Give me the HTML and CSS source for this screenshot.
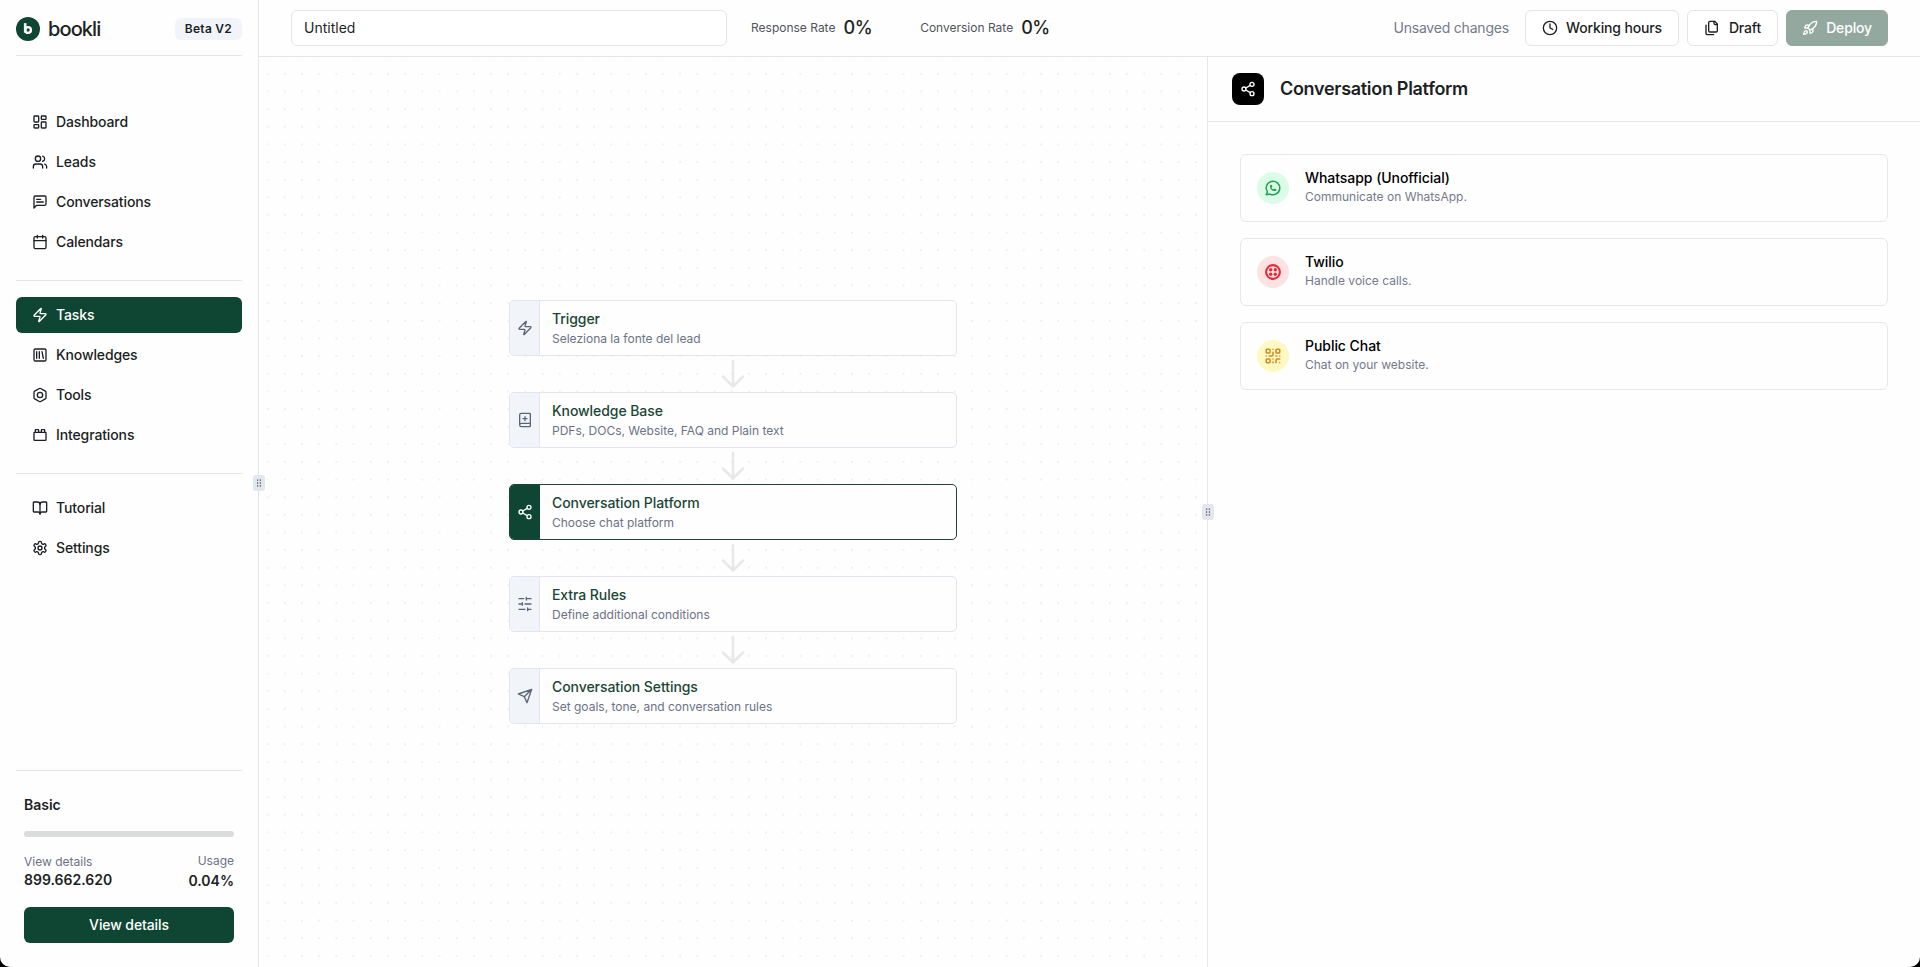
FILE: index.html
```html
<!DOCTYPE html>
<html lang="en">
<head>
    <meta charset="UTF-8">
    <meta name="viewport" content="width=device-width, initial-scale=1.0">
    <title>Bookli - Tasks</title>
    <link rel="stylesheet" href="styles.css">
</head>
<body>
    <div class="app">
        <aside class="sidebar">
            <div class="brand">
                <svg class="logo" viewBox="0 0 24 24"><circle cx="12" cy="12" r="12" fill="#0f4633"/><path d="M9.2 6.2v9.4" stroke="#fff" stroke-width="2.6" fill="none"/><circle cx="12" cy="13" r="2.9" stroke="#fff" stroke-width="2.4" fill="none"/></svg>
                <span class="brand-name">bookli</span>
                <span class="badge">Beta V2</span>
            </div>

            <nav class="menu menu-main">
                <a class="item"><svg class="icon" viewBox="0 0 24 24"><rect x="3" y="3" width="7" height="9" rx="1"/><rect x="14" y="3" width="7" height="5" rx="1"/><rect x="14" y="12" width="7" height="9" rx="1"/><rect x="3" y="16" width="7" height="5" rx="1"/></svg>Dashboard</a>
                <a class="item"><svg class="icon" viewBox="0 0 24 24"><path d="M16 21v-2a4 4 0 0 0-4-4H6a4 4 0 0 0-4 4v2"/><circle cx="9" cy="7" r="4"/><path d="M22 21v-2a4 4 0 0 0-3-3.87M16 3.13a4 4 0 0 1 0 7.75"/></svg>Leads</a>
                <a class="item"><svg class="icon" viewBox="0 0 24 24"><path d="M21 15a2 2 0 0 1-2 2H7l-4 4V5a2 2 0 0 1 2-2h14a2 2 0 0 1 2 2z"/><path d="M13 8H7M17 12H7"/></svg>Conversations</a>
                <a class="item"><svg class="icon" viewBox="0 0 24 24"><path d="M8 2v4M16 2v4"/><rect x="3" y="4" width="18" height="18" rx="2"/><path d="M3 10h18"/></svg>Calendars</a>
            </nav>
            <nav class="menu">
                <a class="item active"><svg class="icon" viewBox="0 0 24 24"><path d="M4 14a1 1 0 0 1-.78-1.63l9.9-10.2a.5.5 0 0 1 .86.46l-1.92 6.02A1 1 0 0 0 13 10h7a1 1 0 0 1 .78 1.63l-9.9 10.2a.5.5 0 0 1-.86-.46l1.92-6.02A1 1 0 0 0 11 14z"/></svg>Tasks</a>
                <a class="item"><svg class="icon" viewBox="0 0 24 24"><rect x="3" y="3" width="18" height="18" rx="2"/><path d="M7 7v10M11 7v10M15 7l2 10"/></svg>Knowledges</a>
                <a class="item"><svg class="icon" viewBox="0 0 24 24"><path d="M21 16V8a2 2 0 0 0-1-1.73l-7-4a2 2 0 0 0-2 0l-7 4A2 2 0 0 0 3 8v8a2 2 0 0 0 1 1.73l7 4a2 2 0 0 0 2 0l7-4A2 2 0 0 0 21 16z"/><circle cx="12" cy="12" r="4"/></svg>Tools</a>
                <a class="item"><svg class="icon" viewBox="0 0 24 24"><rect x="3" y="8" width="18" height="12" rx="1"/><path d="M10 8V5c0-.6-.4-1-1-1H6a1 1 0 0 0-1 1v3M19 8V5c0-.6-.4-1-1-1h-3a1 1 0 0 0-1 1v3"/></svg>Integrations</a>
            </nav>
            <nav class="menu">
                <a class="item"><svg class="icon" viewBox="0 0 24 24"><path d="M12 7v14"/><path d="M3 18a1 1 0 0 1-1-1V4a1 1 0 0 1 1-1h5a4 4 0 0 1 4 4 4 4 0 0 1 4-4h5a1 1 0 0 1 1 1v13a1 1 0 0 1-1 1h-6a3 3 0 0 0-3 3 3 3 0 0 0-3-3z"/></svg>Tutorial</a>
                <a class="item"><svg class="icon" viewBox="0 0 24 24"><path d="M12.22 2h-.44a2 2 0 0 0-2 2v.18a2 2 0 0 1-1 1.73l-.43.25a2 2 0 0 1-2 0l-.15-.08a2 2 0 0 0-2.73.73l-.22.38a2 2 0 0 0 .73 2.73l.15.1a2 2 0 0 1 1 1.72v.51a2 2 0 0 1-1 1.74l-.15.09a2 2 0 0 0-.73 2.73l.22.38a2 2 0 0 0 2.73.73l.15-.08a2 2 0 0 1 2 0l.43.25a2 2 0 0 1 1 1.73V20a2 2 0 0 0 2 2h.44a2 2 0 0 0 2-2v-.18a2 2 0 0 1 1-1.73l.43-.25a2 2 0 0 1 2 0l.15.08a2 2 0 0 0 2.73-.73l.22-.39a2 2 0 0 0-.73-2.73l-.15-.08a2 2 0 0 1-1-1.74v-.5a2 2 0 0 1 1-1.74l.15-.09a2 2 0 0 0 .73-2.73l-.22-.38a2 2 0 0 0-2.73-.73l-.15.08a2 2 0 0 1-2 0l-.43-.25a2 2 0 0 1-1-1.73V4a2 2 0 0 0-2-2z"/><circle cx="12" cy="12" r="3"/></svg>Settings</a>
            </nav>

            <div class="plan">
                <div class="plan-name">Basic</div>
                <div class="progress"></div>
                <div class="usage">
                    <div>
                        <div class="usage-label">View details</div>
                        <div class="usage-value">899.662.620</div>
                    </div>
                    <div class="usage-right">
                        <div class="usage-label">Usage</div>
                        <div class="usage-value">0.04%</div>
                    </div>
                </div>
                <button class="btn-primary">View details</button>
            </div>
            <span class="handle"><svg viewBox="0 0 24 24"><circle cx="9" cy="5" r="1"/><circle cx="9" cy="12" r="1"/><circle cx="9" cy="19" r="1"/><circle cx="15" cy="5" r="1"/><circle cx="15" cy="12" r="1"/><circle cx="15" cy="19" r="1"/></svg></span>
        </aside>

        <div class="main">
            <header class="topbar">
                <input class="task-name" type="text" value="Untitled">
                <div class="rate">Response Rate <b>0%</b></div>
                <div class="rate rate-conversion">Conversion Rate <b>0%</b></div>
                <div class="actions">
                    <span class="unsaved">Unsaved changes</span>
                    <button class="btn"><svg class="icon" viewBox="0 0 24 24"><circle cx="12" cy="12" r="10"/><path d="M12 6v6l4 2"/></svg>Working hours</button>
                    <button class="btn btn-draft"><svg class="icon" viewBox="0 0 24 24"><path d="M20 7h-3a2 2 0 0 1-2-2V2"/><path d="M9 18a2 2 0 0 1-2-2V4a2 2 0 0 1 2-2h7l4 4v10a2 2 0 0 1-2 2Z"/><path d="M3 7.6v12.8A1.6 1.6 0 0 0 4.6 22h9.8"/></svg>Draft</button>
                    <button class="btn btn-deploy"><svg class="icon" viewBox="0 0 24 24"><path d="M4.5 16.5c-1.5 1.26-2 5-2 5s3.74-.5 5-2c.71-.84.7-2.13-.09-2.91a2.18 2.18 0 0 0-2.91-.09z"/><path d="m12 15-3-3a22 22 0 0 1 2-3.95A12.88 12.88 0 0 1 22 2c0 2.72-.78 7.5-6 11a22.35 22.35 0 0 1-4 2z"/><path d="M9 12H4s.55-3.03 2-4c1.62-1.08 5 0 5 0M12 15v5s3.03-.55 4-2c1.08-1.62 0-5 0-5"/></svg>Deploy</button>
                </div>
            </header>

            <div class="workspace">
                <div class="canvas">
                    <div class="step">
                        <div class="step-icon"><svg class="icon" viewBox="0 0 24 24"><path d="M4 14a1 1 0 0 1-.78-1.63l9.9-10.2a.5.5 0 0 1 .86.46l-1.92 6.02A1 1 0 0 0 13 10h7a1 1 0 0 1 .78 1.63l-9.9 10.2a.5.5 0 0 1-.86-.46l1.92-6.02A1 1 0 0 0 11 14z"/></svg></div>
                        <div class="step-text"><h3>Trigger</h3><p>Seleziona la fonte del lead</p></div>
                    </div>
                    <svg class="arrow" viewBox="0 0 36 36"><path d="M18 5v25M8 20.5l10 10 10-10"/></svg>
                    <div class="step">
                        <div class="step-icon"><svg class="icon" viewBox="0 0 24 24"><path d="M4 19.5v-15A2.5 2.5 0 0 1 6.5 2H19a1 1 0 0 1 1 1v18a1 1 0 0 1-1 1H6.5a1 1 0 0 1 0-5H20M12 7v6M9 10h6"/></svg></div>
                        <div class="step-text"><h3>Knowledge Base</h3><p>PDFs, DOCs, Website, FAQ and Plain text</p></div>
                    </div>
                    <svg class="arrow" viewBox="0 0 36 36"><path d="M18 5v25M8 20.5l10 10 10-10"/></svg>
                    <div class="step selected">
                        <div class="step-icon"><svg class="icon" viewBox="0 0 24 24"><circle cx="18" cy="5" r="3"/><circle cx="6" cy="12" r="3"/><circle cx="18" cy="19" r="3"/><path d="m8.59 13.51 6.83 3.98M15.41 6.51l-6.82 3.98"/></svg></div>
                        <div class="step-text"><h3>Conversation Platform</h3><p>Choose chat platform</p></div>
                    </div>
                    <svg class="arrow" viewBox="0 0 36 36"><path d="M18 5v25M8 20.5l10 10 10-10"/></svg>
                    <div class="step">
                        <div class="step-icon"><svg class="icon" viewBox="0 0 24 24"><path d="M21 4h-7M10 4H3M21 12h-9M8 12H3M21 20h-5M12 20H3M14 2v4M8 10v4M16 18v4"/></svg></div>
                        <div class="step-text"><h3>Extra Rules</h3><p>Define additional conditions</p></div>
                    </div>
                    <svg class="arrow" viewBox="0 0 36 36"><path d="M18 5v25M8 20.5l10 10 10-10"/></svg>
                    <div class="step">
                        <div class="step-icon"><svg class="icon" viewBox="0 0 24 24"><path d="m22 2-7 20-4-9-9-4ZM22 2 11 13"/></svg></div>
                        <div class="step-text"><h3>Conversation Settings</h3><p>Set goals, tone, and conversation rules</p></div>
                    </div>
                </div>

                <section class="panel">
                    <span class="handle"><svg viewBox="0 0 24 24"><circle cx="9" cy="5" r="1"/><circle cx="9" cy="12" r="1"/><circle cx="9" cy="19" r="1"/><circle cx="15" cy="5" r="1"/><circle cx="15" cy="12" r="1"/><circle cx="15" cy="19" r="1"/></svg></span>
                    <div class="panel-header">
                        <span class="panel-icon"><svg class="icon" viewBox="0 0 24 24"><circle cx="18" cy="5" r="3"/><circle cx="6" cy="12" r="3"/><circle cx="18" cy="19" r="3"/><path d="m8.59 13.51 6.83 3.98M15.41 6.51l-6.82 3.98"/></svg></span>
                        <h2>Conversation Platform</h2>
                    </div>
                    <div class="platforms">
                        <div class="platform">
                            <span class="circle whatsapp"><svg class="icon" viewBox="0 0 24 24"><path d="m3 21 1.65-3.8a9 9 0 1 1 3.4 2.9L3 21"/><path d="M9 10a.5.5 0 0 0 1 0V9a.5.5 0 0 0-1 0v1a5 5 0 0 0 5 5h1a.5.5 0 0 0 0-1h-1a.5.5 0 0 0 0 1"/></svg></span>
                            <div class="platform-text"><h4>Whatsapp (Unofficial)</h4><p>Communicate on WhatsApp.</p></div>
                        </div>
                        <div class="platform">
                            <span class="circle twilio"><svg viewBox="0 0 16 16"><circle cx="8" cy="8" r="6.9" fill="none" stroke="#e5283b" stroke-width="2.1"/><g fill="#e5283b"><circle cx="5.7" cy="5.7" r="1.7"/><circle cx="10.3" cy="5.7" r="1.7"/><circle cx="5.7" cy="10.3" r="1.7"/><circle cx="10.3" cy="10.3" r="1.7"/></g></svg></span>
                            <div class="platform-text"><h4>Twilio</h4><p>Handle voice calls.</p></div>
                        </div>
                        <div class="platform">
                            <span class="circle chat"><svg class="icon" viewBox="0 0 24 24"><rect x="3" y="3" width="5" height="5" rx="1"/><rect x="16" y="3" width="5" height="5" rx="1"/><rect x="3" y="16" width="5" height="5" rx="1"/><path d="M21 16h-3a2 2 0 0 0-2 2v3M21 21v.01M12 7v3a2 2 0 0 1-2 2H7M3 12h.01M12 3h.01M12 16v.01M16 12h1M21 12v.01M12 21v-1"/></svg></span>
                            <div class="platform-text"><h4>Public Chat</h4><p>Chat on your website.</p></div>
                        </div>
                    </div>
                </section>
            </div>
        </div>
    </div>
</body>
</html>
```
FILE: styles.css
```css
* {
    box-sizing: border-box;
}
body {
    margin: 0;
    background-color: #000;
    font-family: Inter, sans-serif;
    font-size: 14px;
    line-height: 20px;
    color: #1c1f24;
}
h2, h3, h4, p {
    margin: 0;
}
button, input {
    font-family: inherit;
    font-size: 14px;
}
.app {
    display: flex;
    height: 100vh;
    background-color: #fefefe;
    border-radius: 0 0 10px 10px;
}
.icon {
    width: 16px;
    height: 16px;
    flex: none;
    fill: none;
    stroke: currentColor;
    stroke-width: 2;
    stroke-linecap: round;
    stroke-linejoin: round;
}

/* sidebar */
.sidebar {
    position: relative;
    display: flex;
    flex-direction: column;
    width: 259px;
    flex: none;
    padding: 0 16px 24px;
    border-right: 1px solid #e2e5ea;
}
.brand {
    display: flex;
    align-items: center;
    height: 56px;
    padding-top: 2px;
    border-bottom: 1px solid #e2e5ea;
}
.logo {
    width: 24px;
    height: 24px;
}
.brand-name {
    margin-left: 8px;
    font-size: 20px;
    font-weight: 500;
    letter-spacing: -0.9px;
}
.badge {
    margin-left: auto;
    padding: 1px 10px;
    border-radius: 6px;
    background-color: #f1f5f9;
    font-size: 12px;
    font-weight: 600;
    letter-spacing: 0.25px;
}
.menu {
    display: flex;
    flex-direction: column;
    gap: 4px;
    padding: 16px 0 20px;
    border-bottom: 1px solid #e2e5ea;
}
.menu-main {
    padding-top: 48px;
}
.menu:nth-of-type(3) {
    border-bottom: none;
}
.item {
    display: flex;
    align-items: center;
    gap: 8px;
    height: 36px;
    padding: 0 16px;
    border-radius: 6px;
    font-weight: 450;
    letter-spacing: -0.12px;
}
.item.active {
    background-color: #0f4633;
    color: #fff;
}
.plan {
    margin-top: auto;
    padding: 24px 8px 0;
    border-top: 1px solid #e2e5ea;
}
.plan-name {
    font-weight: 600;
}
.progress {
    height: 6px;
    margin: 16px 0;
    border-radius: 3px;
    background-color: #dadddb;
}
.usage {
    display: flex;
    justify-content: space-between;
    margin-bottom: 17px;
}
.usage > div {
    padding-top: 1px;
}
.usage .usage-right {
    padding-top: 0;
    text-align: right;
}
.usage-right .usage-label {
    margin-bottom: 2px;
}
.usage-label {
    font-size: 12px;
    line-height: 16px;
    color: #6b7286;
}
.usage-value {
    margin-bottom: -1px;
    font-weight: 600;
}
.btn-primary {
    width: 100%;
    height: 36px;
    border: none;
    border-radius: 6px;
    background-color: #0f4633;
    color: #fff;
    font-weight: 500;
    letter-spacing: -0.1px;
    padding-bottom: 2px;
}
.handle {
    position: absolute;
    top: 50%;
    right: -7px;
    z-index: 1;
    display: flex;
    align-items: center;
    justify-content: center;
    width: 12px;
    height: 16px;
    margin-top: -9px;
    border-radius: 3px;
    background-color: #e2e6ee;
}
.handle svg {
    width: 10px;
    height: 10px;
    stroke: #1c1f24;
    stroke-width: 1;
}

/* top bar */
.main {
    display: flex;
    flex-direction: column;
    flex: 1;
    min-width: 0;
}
.topbar {
    display: flex;
    align-items: center;
    height: 57px;
    padding: 0 32px;
    border-bottom: 1px solid #e5e5ea;
}
.task-name {
    width: 436px;
    height: 36px;
    padding: 0 12px 1px;
    border: 1px solid #e2e5ee;
    border-radius: 6px;
    background-color: #fff;
    color: #1c1f24;
}
.rate {
    display: flex;
    align-items: center;
    gap: 8px;
    margin-left: 24px;
    font-size: 12px;
    color: #50545c;
}
.rate b {
    font-size: 18px;
    font-weight: 450;
    letter-spacing: -0.4px;
    color: #1c1f24;
}
.rate-conversion {
    margin-left: 48px;
}
.actions {
    display: flex;
    align-items: center;
    gap: 8px;
    margin-left: auto;
}
.unsaved {
    margin-right: 8px;
    letter-spacing: -0.2px;
    color: #747a8c;
}
.btn {
    display: flex;
    align-items: center;
    gap: 8px;
    height: 36px;
    padding: 0 16px 1px;
    border: 1px solid #e2e5ea;
    border-radius: 6px;
    background-color: #fff;
    color: #1c1f24;
    font-weight: 500;
    letter-spacing: -0.15px;
}
.btn-draft {
    gap: 9px;
}
.btn-deploy {
    padding: 0 15px 1px;
    border-color: #93a9a0;
    background-color: #93a9a0;
    color: #fff;
}

/* flow */
.workspace {
    display: flex;
    flex: 1;
}
.canvas {
    display: flex;
    flex-direction: column;
    align-items: center;
    justify-content: center;
    width: 948px;
    background-image: radial-gradient(circle, #f0f0f0 1px, transparent 1.5px);
    background-size: 17.2px 17.65px;
    background-position: 0 8px;
}
.step {
    display: flex;
    width: 448px;
    height: 56px;
    border: 1px solid #e2e5ee;
    border-radius: 5px;
    background-color: #fefefe;
    overflow: hidden;
}
.step-icon {
    display: flex;
    align-items: center;
    justify-content: center;
    width: 30px;
    border-right: 1px solid #e2e5ee;
    background-color: #f1f5f9;
    color: #5d6478;
}
.step-text {
    padding: 8px 12px;
}
.step h3 {
    font-size: 14px;
    font-weight: 450;
    letter-spacing: -0.07px;
    color: #1b4636;
}
.step p {
    margin-top: 1px;
    font-size: 12px;
    line-height: 18px;
    color: #6b7286;
}
.step.selected {
    border-color: #24423a;
}
.selected .step-icon {
    border-color: #0f4633;
    background-color: #0f4633;
    color: #fff;
}
.arrow {
    width: 36px;
    height: 36px;
    fill: none;
    stroke: #e8e8e8;
    stroke-width: 2.5;
    stroke-linecap: round;
    stroke-linejoin: round;
}

/* right panel */
.panel {
    position: relative;
    flex: 1;
    border-left: 1px solid #e5e7ea;
}
.panel .handle {
    left: -6px;
    margin-top: -8px;
}
.panel-header {
    display: flex;
    align-items: center;
    gap: 16px;
    height: 65px;
    padding: 0 24px;
    border-bottom: 1px solid #e5e7ea;
}
.panel-icon {
    display: flex;
    align-items: center;
    justify-content: center;
    width: 32px;
    height: 32px;
    border-radius: 8px;
    background-color: #000;
    color: #fff;
}
.panel h2 {
    font-size: 18px;
    font-weight: 600;
    letter-spacing: -0.3px;
}
.platforms {
    display: flex;
    flex-direction: column;
    gap: 16px;
    padding: 32px;
}
.platform {
    display: flex;
    align-items: center;
    gap: 16px;
    height: 68px;
    padding: 0 16px;
    border: 1px solid #e5e7ea;
    border-radius: 6px;
}
.platform-text {
    padding-bottom: 2px;
}
.platform h4 {
    font-size: 14px;
    font-weight: 500;
    line-height: 20px;
    letter-spacing: -0.05px;
    color: #000;
}
.platform p {
    font-size: 12px;
    line-height: 18px;
    color: #747a8c;
}
.circle {
    display: flex;
    align-items: center;
    justify-content: center;
    width: 32px;
    height: 32px;
    border-radius: 50%;
}
.circle svg {
    width: 16px;
    height: 16px;
}
.circle .icon {
    width: 18px;
    height: 18px;
}
.whatsapp {
    background-color: #dcfce7;
    color: #22a055;
}
.twilio {
    background-color: #fee2e2;
}
.chat {
    background-color: #fef9c3;
    color: #d08a1c;
}
```
